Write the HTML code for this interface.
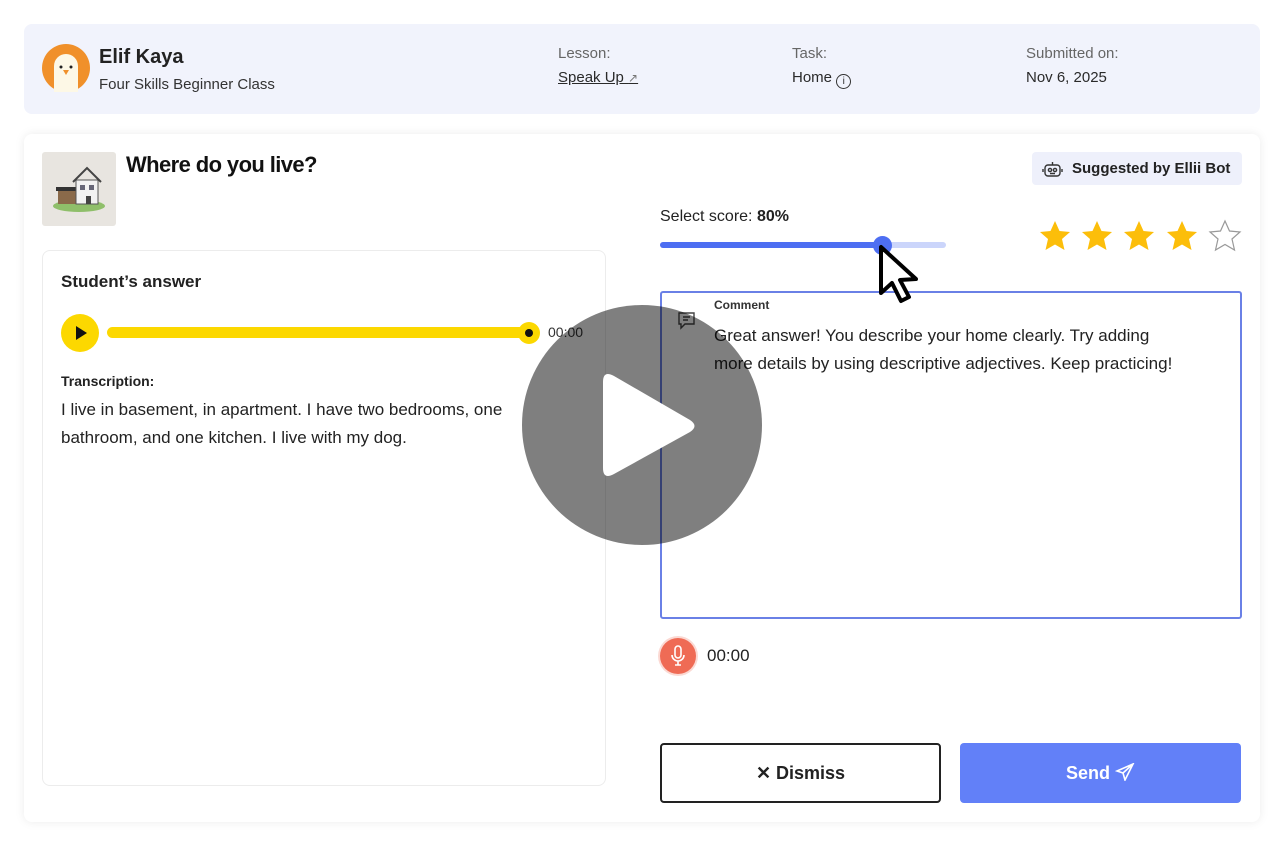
<!DOCTYPE html>
<html><head><meta charset="utf-8">
<style>
*{box-sizing:border-box;margin:0;padding:0}
body{width:1285px;height:850px;background:#fff;font-family:"Liberation Sans",sans-serif;color:#1d1d1f;position:relative;overflow:hidden}
.abs{position:absolute}
.hdr{left:24px;top:24px;width:1236px;height:90px;background:#f1f3fc;border-radius:8px}
.card{left:24px;top:134px;width:1236px;height:688px;background:#fff;border-radius:8px;box-shadow:0 0 10px rgba(0,0,0,0.08)}
.lbl{font-size:15px;color:#666}
.val{font-size:15px;color:#2a2a2a}
</style></head><body>
<div class="abs hdr"></div>
<svg class="abs" style="left:42px;top:44px" width="48" height="48" viewBox="0 0 48 48">
<circle cx="24" cy="24" r="24" fill="#f0902a"/>
<path d="M12 48 V22 a12 12 0 0 1 24 0 V48 Z" fill="#fdf8e6"/>
<circle cx="19" cy="23" r="1.5" fill="#222"/><circle cx="29" cy="23" r="1.5" fill="#222"/>
<path d="M21 26 L27 26 L24 31 Z" fill="#f0902a"/>
</svg>
<div class="abs" style="left:99px;top:46px;font-size:20px;font-weight:bold;color:#222">Elif Kaya</div>
<div class="abs" style="left:99px;top:76px;font-size:15px;color:#333">Four Skills Beginner Class</div>
<div class="abs lbl" style="left:558px;top:45px">Lesson:</div>
<div class="abs val" style="left:558px;top:69px;text-decoration:underline">Speak Up <span style="font-size:12px;color:#777;text-decoration:none">↗</span></div>
<div class="abs lbl" style="left:792px;top:45px">Task:</div>
<div class="abs val" style="left:792px;top:69px">Home <span style="display:inline-block;width:15px;height:15px;border:1.3px solid #333;border-radius:50%;font-size:10px;text-align:center;line-height:13px;vertical-align:-2px">i</span></div>
<div class="abs lbl" style="left:1026px;top:45px">Submitted on:</div>
<div class="abs val" style="left:1026px;top:69px">Nov 6, 2025</div>

<div class="abs card"></div>
<svg class="abs" style="left:42px;top:152px" width="74" height="74" viewBox="0 0 74 74">
<rect width="74" height="74" rx="3" fill="#e8e5e0"/>
<ellipse cx="37" cy="54" rx="26" ry="6" fill="#8fbf6a"/>
<rect x="16" y="38" width="18" height="14" fill="#8a6a4a"/>
<rect x="14" y="35" width="22" height="4" fill="#333"/>
<rect x="34" y="28" width="22" height="24" fill="#f2f2f2" stroke="#555"/>
<path d="M31 30 L45 16 L59 30" fill="none" stroke="#444" stroke-width="2"/>
<rect x="38" y="33" width="5" height="5" fill="#667"/><rect x="47" y="33" width="5" height="5" fill="#667"/>
<rect x="44" y="44" width="5" height="8" fill="#444"/>
</svg>
<div class="abs" style="left:126px;top:152px;font-size:22px;font-weight:bold;letter-spacing:-0.6px;color:#111">Where do you live?</div>

<div class="abs" style="left:42px;top:250px;width:564px;height:536px;border:1px solid #ececec;border-radius:8px"></div>
<div class="abs" style="left:61px;top:272px;font-size:17px;font-weight:bold;color:#222">Student’s answer</div>
<div class="abs" style="left:61px;top:314px;width:38px;height:38px;border-radius:50%;background:#fcd800"></div>
<div class="abs" style="left:76px;top:326px;width:0;height:0;border-left:11px solid #111;border-top:7px solid transparent;border-bottom:7px solid transparent"></div>
<div class="abs" style="left:107px;top:327px;width:424px;height:11px;border-radius:6px;background:#fcd800"></div>
<div class="abs" style="left:518px;top:322px;width:22px;height:22px;border-radius:50%;background:#fcd800"></div>
<div class="abs" style="left:525px;top:329px;width:8px;height:8px;border-radius:50%;background:#111"></div>
<div class="abs" style="left:548px;top:324px;font-size:14px;color:#333">00:00</div>
<div class="abs" style="left:61px;top:373px;font-size:14px;font-weight:bold;color:#222">Transcription:</div>
<div class="abs" style="left:61px;top:396px;width:500px;font-size:17px;line-height:28px;color:#222">I live in basement, in apartment. I have two bedrooms, one bathroom, and one kitchen. I live with my dog.</div>

<div class="abs" style="left:1032px;top:152px;width:210px;height:33px;background:#eef0fb;border-radius:4px"></div>
<svg class="abs" style="left:1042px;top:159px" width="21" height="20" viewBox="0 0 21 20" fill="none" stroke="#333" stroke-width="1.4"><rect x="3" y="6" width="15" height="11" rx="3"/><circle cx="8" cy="11" r="1.6"/><circle cx="13" cy="11" r="1.6"/><path d="M10.5 6V3M1 10v3M20 10v3M8 14.5h5"/></svg>
<div class="abs" style="left:1072px;top:160px;font-size:15px;font-weight:bold;color:#222">Suggested by Ellii Bot</div>

<div class="abs" style="left:660px;top:208px;font-size:16px;color:#222">Select score: <b>80%</b></div>
<div class="abs" style="left:660px;top:242px;width:286px;height:6px;border-radius:3px;background:#cbd5fb"></div>
<div class="abs" style="left:660px;top:242px;width:223px;height:6px;border-radius:3px;background:#4d6ef2"></div>
<div class="abs" style="left:873px;top:236px;width:19px;height:19px;border-radius:50%;background:#4d6ef2"></div>
<svg class="abs" style="left:1036px;top:218px" width="210" height="38" viewBox="0 0 210 38">
<g fill="#fcbe0a"><path id="s" d="M19 3 L23.5 13 L34 14 L26 21 L28.5 32 L19 26.5 L9.5 32 L12 21 L4 14 L14.5 13 Z"/>
<use href="#s" x="42"/><use href="#s" x="84"/><use href="#s" x="127"/></g>
<use href="#s" x="170" fill="#fff" stroke="#999" stroke-width="1.2"/>
</svg>

<div class="abs" style="left:660px;top:291px;width:582px;height:328px;border:2px solid #6a80e6;border-radius:3px"></div>
<div class="abs" style="left:714px;top:298px;font-size:12px;font-weight:bold;color:#333">Comment</div>
<svg class="abs" style="left:677px;top:311px" width="19" height="19" viewBox="0 0 19 19" fill="none" stroke="#444" stroke-width="1.4"><path d="M2 2h15v11H8l-4 4v-4H2z"/><path d="M6 6h7M6 9h5"/></svg>
<div class="abs" style="left:714px;top:322px;width:478px;font-size:17px;line-height:28px;color:#222">Great answer! You describe your home clearly. Try adding more details by using descriptive adjectives. Keep practicing!</div>

<div class="abs" style="left:660px;top:638px;width:36px;height:36px;border-radius:50%;background:#ef6b55;box-shadow:0 0 0 2px #fbd9d3"></div>
<svg class="abs" style="left:669px;top:644px" width="18" height="24" viewBox="0 0 18 24" fill="none" stroke="#fff" stroke-width="1.6"><rect x="6" y="2" width="6" height="12" rx="3"/><path d="M3 11a6 6 0 0 0 12 0M9 17v4M6 21h6"/></svg>
<div class="abs" style="left:707px;top:646px;font-size:17px;color:#222">00:00</div>

<div class="abs" style="left:660px;top:743px;width:281px;height:60px;border:2px solid #222;border-radius:4px;text-align:center;line-height:56px;font-size:18px;font-weight:bold;color:#222">✕ Dismiss</div>
<div class="abs" style="left:960px;top:743px;width:281px;height:60px;background:#6280f8;border-radius:4px;text-align:center;line-height:60px;font-size:18px;font-weight:bold;color:#fff">Send <svg width="20" height="18" viewBox="0 0 20 18" style="vertical-align:-2px" fill="none" stroke="#fff" stroke-width="1.6"><path d="M18 1 L2 8 L8 10 L10 17 Z M8 10 L18 1"/></svg></div>

<div class="abs" style="left:522px;top:305px;width:240px;height:240px;border-radius:50%;background:rgba(0,0,0,0.5)"></div>
<svg class="abs" style="left:600px;top:370px" width="100" height="112" viewBox="0 0 100 112"><path d="M14 6 Q3 0 3 12 V98 Q3 110 14 104 L90 62 Q99 56 90 50 Z" fill="#fff"/></svg>

<svg class="abs" style="left:876px;top:243px" width="50" height="64" viewBox="0 0 50 64"><path d="M5 4 L5 50 L16 40 L25 58 L33 54 L24 37 L40 36 Z" fill="#fff" stroke="#000" stroke-width="4" stroke-linejoin="round"/></svg>
</body></html>
